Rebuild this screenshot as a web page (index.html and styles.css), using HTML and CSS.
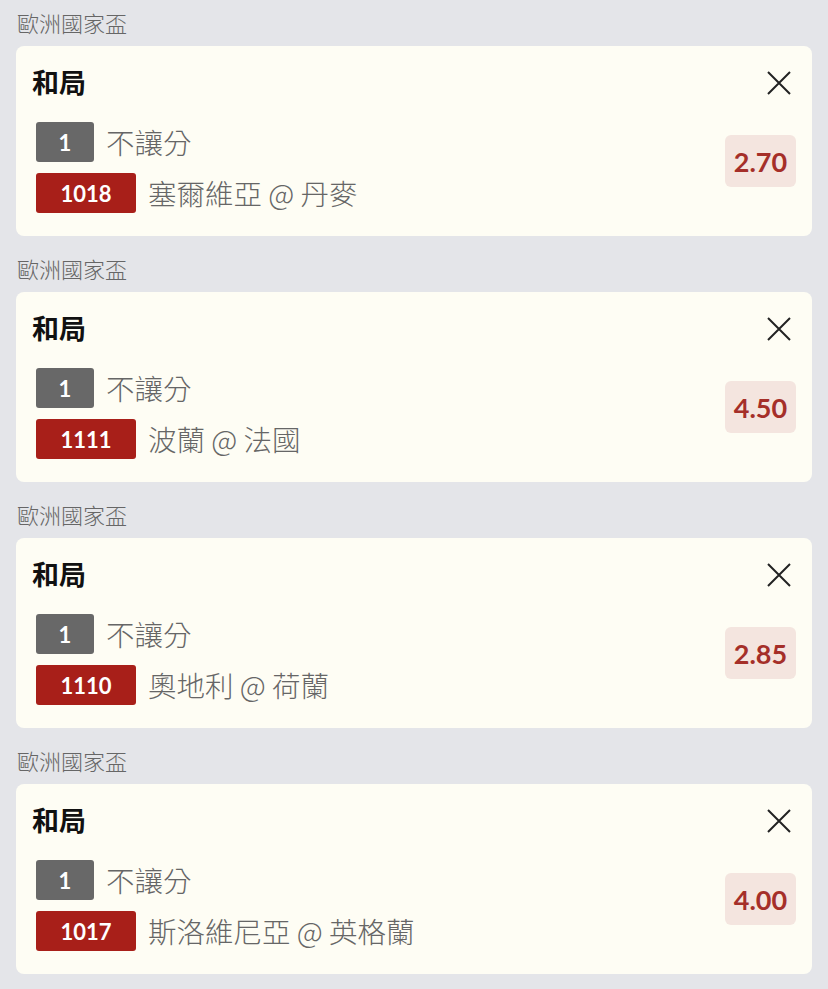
FILE: index.html
```html
<!DOCTYPE html>
<html lang="zh-Hant">
<head>
<meta charset="utf-8">
<link rel="stylesheet" href="styles.css">
</head>
<body>
<main class="list">
  <section class="bet">
    <div class="league">歐洲國家盃</div>
    <div class="card">
      <div class="info">
        <div class="title">和局</div>
        <div class="row"><span class="tag tag-grey">1</span><span class="text">不讓分</span></div>
        <div class="row"><span class="tag tag-red">1018</span><span class="text">塞爾維亞 @ 丹麥</span></div>
      </div>
      <div class="side">
        <div class="close"><svg width="24" height="24" viewBox="0 0 24 24"><path d="M1 1L23 23M23 1L1 23" stroke="#222" stroke-width="2" fill="none"/></svg></div>
        <div class="odds">2.70</div>
      </div>
    </div>
  </section>
  <section class="bet">
    <div class="league">歐洲國家盃</div>
    <div class="card">
      <div class="info">
        <div class="title">和局</div>
        <div class="row"><span class="tag tag-grey">1</span><span class="text">不讓分</span></div>
        <div class="row"><span class="tag tag-red">1111</span><span class="text">波蘭 @ 法國</span></div>
      </div>
      <div class="side">
        <div class="close"><svg width="24" height="24" viewBox="0 0 24 24"><path d="M1 1L23 23M23 1L1 23" stroke="#222" stroke-width="2" fill="none"/></svg></div>
        <div class="odds">4.50</div>
      </div>
    </div>
  </section>
  <section class="bet">
    <div class="league">歐洲國家盃</div>
    <div class="card">
      <div class="info">
        <div class="title">和局</div>
        <div class="row"><span class="tag tag-grey">1</span><span class="text">不讓分</span></div>
        <div class="row"><span class="tag tag-red">1110</span><span class="text">奧地利 @ 荷蘭</span></div>
      </div>
      <div class="side">
        <div class="close"><svg width="24" height="24" viewBox="0 0 24 24"><path d="M1 1L23 23M23 1L1 23" stroke="#222" stroke-width="2" fill="none"/></svg></div>
        <div class="odds">2.85</div>
      </div>
    </div>
  </section>
  <section class="bet">
    <div class="league">歐洲國家盃</div>
    <div class="card">
      <div class="info">
        <div class="title">和局</div>
        <div class="row"><span class="tag tag-grey">1</span><span class="text">不讓分</span></div>
        <div class="row"><span class="tag tag-red">1017</span><span class="text">斯洛維尼亞 @ 英格蘭</span></div>
      </div>
      <div class="side">
        <div class="close"><svg width="24" height="24" viewBox="0 0 24 24"><path d="M1 1L23 23M23 1L1 23" stroke="#222" stroke-width="2" fill="none"/></svg></div>
        <div class="odds">4.00</div>
      </div>
    </div>
  </section>
</main>
</body>
</html>
```

FILE: styles.css
```css
html, body {
  margin: 0;
  padding: 0;
  background: #e4e5e9;
  font-family: Lato, "Noto Sans CJK TC", sans-serif;
}
.list {
  padding: 6px 16px 0;
  display: flex;
  flex-direction: column;
  gap: 16px;
}
.league {
  font-family: "Noto Sans CJK TC", sans-serif;
  font-size: 22px;
  font-weight: 300;
  line-height: 32px;
  color: #666;
  margin-bottom: 8px;
  padding-left: 1px;
}
.card {
  background: #fefdf4;
  border-radius: 8px;
  height: 190px;
  box-sizing: border-box;
  padding: 18px 16px 0 20px;
  display: flex;
  justify-content: space-between;
}
.info {
  display: flex;
  flex-direction: column;
}
.title {
  font-size: 27px;
  line-height: 37px;
  font-weight: 700;
  color: #111;
  margin-left: -4px;
  margin-bottom: 21px;
}
.row {
  display: flex;
  align-items: center;
  gap: 12px;
  height: 40px;
}
.row + .row {
  margin-top: 11px;
}
.tag {
  height: 40px;
  border-radius: 3px;
  color: #fff;
  font-size: 22px;
  font-weight: 700;
  display: flex;
  align-items: center;
  justify-content: center;
}
.tag-grey {
  width: 58px;
  background: #686868;
}
.tag-red {
  width: 100px;
  background: #a81f19;
}
.text {
  font-family: "Noto Sans CJK TC", sans-serif;
  font-size: 28.5px;
  font-weight: 300;
  line-height: 40px;
  color: #666;
}
.side {
  display: flex;
  flex-direction: column;
  align-items: flex-end;
}
.close {
  height: 37px;
  display: flex;
  align-items: center;
  margin-right: 5px;
}
.close svg {
  display: block;
}
.odds {
  margin-top: 34px;
  height: 52px;
  width: 71px;
  border-radius: 6px;
  background: #f4e5df;
  color: #a52f29;
  font-size: 27px;
  font-weight: 700;
  display: flex;
  align-items: center;
  justify-content: center;
}
```
